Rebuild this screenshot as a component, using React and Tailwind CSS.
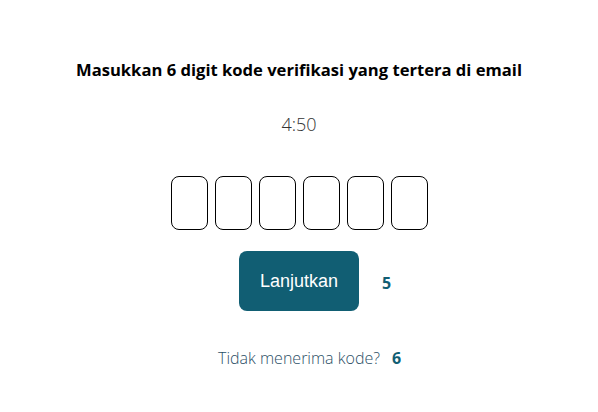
export default function App() {
  const digits = ["", "", "", "", "", ""];
  return (
    <div className="w-[598px] h-[412px] bg-white flex flex-col items-center pt-[57px] font-['Open_Sans',sans-serif]">
      <h1 className="text-[16.6px] leading-[26px] font-bold text-black">
        Masukkan 6 digit kode verifikasi yang tertera di email
      </h1>
      <div className="mt-[29px] text-[18px] leading-[24px] font-light text-[#333]">4:50</div>
      <div className="mt-[40px] flex gap-[7px]">
        {digits.map((d, i) => (
          <input
            key={i}
            value={d}
            readOnly
            maxLength={1}
            className="w-[37px] h-[54px] border border-black rounded-[8px] text-center text-xl outline-none"
          />
        ))}
      </div>
      <div className="mt-[21px] w-full grid grid-cols-[1fr_auto_1fr] items-center">
        <div />
        <button className="w-[120px] h-[60px] rounded-[8px] bg-[#115e73] text-white text-[18px] font-['Liberation_Sans',Arial,sans-serif]">
          Lanjutkan
        </button>
        <div className="pl-[23px] pt-[4px] text-[16px] font-bold text-[#115e73]">5</div>
      </div>
      <div className="mt-[35px] w-full grid grid-cols-[1fr_auto_1fr] items-center">
        <div />
        <span className="text-[16px] font-light text-[#2c4f66]">Tidak menerima kode?</span>
        <div className="pl-[12px] text-[16px] font-bold text-[#115e73]">6</div>
      </div>
    </div>
  );
}
